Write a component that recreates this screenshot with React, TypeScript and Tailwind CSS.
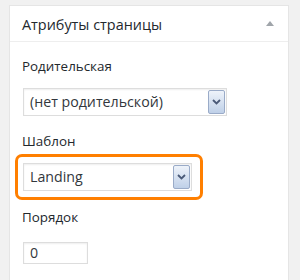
import React from "react";

function Chevron() {
  return (
    <svg width="9" height="6" viewBox="0 0 9 6" className="block">
      <path d="M1 1 L4.5 4.5 L8 1" stroke="#4a5a78" strokeWidth="1.8" fill="none" />
    </svg>
  );
}

function FakeSelect({ text, w }: { text: string; w: string }) {
  return (
    <div
      className={`${w} h-[28px] flex items-stretch border border-[#dddddd] bg-white shadow-[inset_0_1px_2px_rgba(0,0,0,0.07)]`}
    >
      <div className="flex-1 flex items-center pl-[6px] text-[14.2px] text-[#32373c] leading-none">
        {text}
      </div>
      <div className="w-[17px] my-[1px] mr-[1px] flex items-center justify-center border border-[#9aabc8] rounded-[2px] bg-gradient-to-b from-[#eef3fa] to-[#bfd0e8]">
        <Chevron />
      </div>
    </div>
  );
}

export default function App() {
  return (
    <div
      className="w-[300px] h-[280px] bg-[#f1f1f1] pt-[5px] pl-[9px] overflow-hidden"
      style={{ fontFamily: '"Open Sans", "Noto Sans", sans-serif' }}
    >
      <div className="w-[280px] h-[300px] bg-white border border-[#e5e5e5]">
        <div className="h-[36px] flex items-center justify-between pl-[12px] pr-[14px] border-b border-[#eeeeee]">
          <span className="text-[14.4px] text-[#23282d] pt-[2px]">Атрибуты страницы</span>
          <svg width="8" height="5" viewBox="0 0 8 5">
            <path d="M0 5 L4 0 L8 5 Z" fill="#a0a5aa" />
          </svg>
        </div>
        <div className="px-[12px] flex flex-col">
          <div className="mt-[15px] text-[13.4px] leading-[18px] text-[#23282d]">Родительская</div>
          <div className="mt-[13px] ml-[1px]">
            <FakeSelect text="(нет родительской)" w="w-[204px]" />
          </div>
          <div className="mt-[16px] text-[13.4px] leading-[18px] text-[#23282d]">Шаблон</div>
          <div className="mt-[4px] -ml-[7px] w-[188px] h-[46px] border-[3px] border-[#ff7f00] rounded-[7px] pl-[5px] pt-[6px]">
            <FakeSelect text="Landing" w="w-[169px]" />
          </div>
          <div className="mt-[8px] text-[13.4px] leading-[18px] text-[#23282d]">Порядок</div>
          <div className="mt-[16px] ml-[1px] w-[65px] h-[22px] border border-[#dddddd] bg-white shadow-[inset_0_1px_2px_rgba(0,0,0,0.07)] flex items-center pl-[6px] text-[14.2px] text-[#32373c]">
            0
          </div>
        </div>
      </div>
    </div>
  );
}
